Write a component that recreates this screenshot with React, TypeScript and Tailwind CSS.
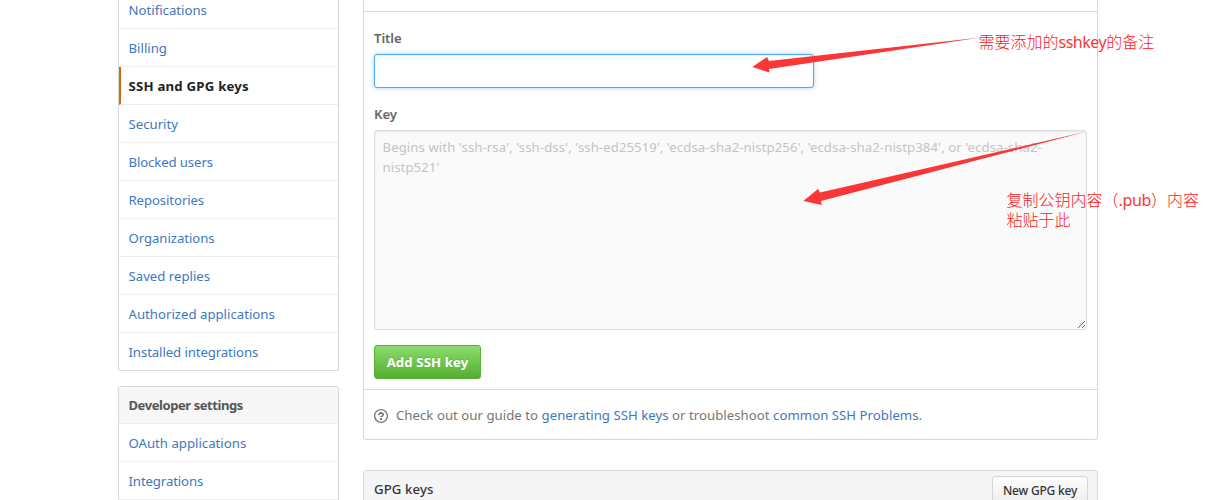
import React from "react";

const accountLinks = [
  { label: "Notifications", spacing: "tracking-normal" },
  { label: "Billing", spacing: "tracking-normal" },
  { label: "SSH and GPG keys", spacing: "tracking-[0.22px]", selected: true },
  { label: "Security", spacing: "tracking-normal" },
  { label: "Blocked users", spacing: "tracking-[-0.12px]" },
  { label: "Repositories", spacing: "tracking-[-0.1px]" },
  { label: "Organizations", spacing: "tracking-[-0.07px]" },
  { label: "Saved replies", spacing: "tracking-normal" },
  { label: "Authorized applications", spacing: "tracking-normal" },
  { label: "Installed integrations", spacing: "tracking-[-0.1px]" },
];

const developerLinks = [
  { label: "OAuth applications", spacing: "tracking-normal" },
  { label: "Integrations", spacing: "tracking-[-0.12px]" },
];

type MenuLink = { label: string; spacing: string; selected?: boolean };

function MenuItem({ label, spacing, selected }: MenuLink) {
  return (
    <a
      href="#"
      className={`flex h-[38px] shrink-0 items-center border-b border-[#eeeeee] pt-px last:h-[37px] last:border-b-0 ${spacing} ${
        selected
          ? "border-l-2 border-l-[#d26911] pl-[7.5px] font-bold text-[#222222]"
          : "pl-[9.5px] text-[#4078c0]"
      }`}
    >
      {label}
    </a>
  );
}

function Sidebar() {
  return (
    <aside className="flex w-[221px] shrink-0 flex-col">
      <nav className="-mt-[9px] flex flex-col rounded-b-[3px] border border-t-0 border-[#d8d8d8]">
        {accountLinks.map((link) => (
          <MenuItem key={link.label} {...link} />
        ))}
      </nav>
      <nav className="mt-[15px] flex flex-col rounded-[3px] border border-[#d8d8d8]">
        <h3 className="flex h-[37px] items-center rounded-t-[2px] border-b border-[#eeeeee] bg-[#f7f7f7] pl-[9.5px] text-[13px] font-bold tracking-[-0.42px] text-[#555555]">
          Developer settings
        </h3>
        {developerLinks.map((link) => (
          <MenuItem key={link.label} {...link} />
        ))}
        <span className="h-2" />
      </nav>
    </aside>
  );
}

function QuestionIcon() {
  return (
    <svg width="14" height="16" viewBox="0 0 14 16" fill="#767676" className="shrink-0">
      <path
        fillRule="evenodd"
        d="M6 10h2v2H6v-2zm4-3.5C10 8.64 8 9 8 9H6c0-.55.45-1 1-1h.5c.28 0 .5-.22.5-.5v-1c0-.28-.22-.5-.5-.5h-1c-.28 0-.5.22-.5.5V7H4c0-1.5 1.5-3 3-3s3 1 3 2.500zM7 2.300c3.140 0 5.700 2.560 5.700 5.700s-2.560 5.700-5.700 5.700A5.710 5.710 0 0 1 1.300 8c0-3.140 2.560-5.700 5.700-5.700zM7 1C3.140 1 0 4.140 0 8s3.140 7 7 7 7-3.140 7-7-3.140-7-7-7z"
      />
    </svg>
  );
}

function KeyForm() {
  return (
    <section className="flex h-[440px] shrink-0 flex-col rounded-b-[3px] border border-t-0 border-[#d8d8d8]">
      <div className="h-3 shrink-0 border-b border-[#d8d8d8]" />
      <form className="flex h-[378px] shrink-0 flex-col items-start border-b border-[#d8d8d8] px-[10px]">
        <label htmlFor="title" className="mt-4 h-5 text-[13.2px] leading-5 font-semibold tracking-[-0.1px] text-[#666666]">
          Title
        </label>
        <input
          id="title"
          className="mt-[6px] h-[34px] w-[440px] rounded-[3px] border border-[#51a7e8] bg-white px-2 shadow-[inset_0_1px_2px_rgba(0,0,0,0.075),0_0_5px_rgba(81,167,232,0.5)] outline-none"
        />
        <label htmlFor="key" className="mt-4 h-5 text-[13.2px] leading-5 font-semibold tracking-[-0.1px] text-[#666666]">
          Key
        </label>
        <textarea
          id="key"
          placeholder="Begins with 'ssh-rsa', 'ssh-dss', 'ssh-ed25519', 'ecdsa-sha2-nistp256', 'ecdsa-sha2-nistp384', or 'ecdsa-sha2-nistp521'"
          className="mt-[6px] h-[200px] w-[713px] resize rounded-[3px] border border-[#dddddd] bg-[#fafafa] px-[7.5px] py-[6px] leading-5 tracking-[0.07px] shadow-[inset_0_1px_2px_rgba(0,0,0,0.075)] outline-none placeholder:text-[#c4c4c4]"
        />
        <button
          type="button"
          className="mt-[15px] h-[34px] w-[107px] rounded-[3px] border border-[#5aad35] bg-linear-to-b from-[#8add6d] to-[#55ae2e] text-[13.2px] font-bold tracking-[0.1px] text-white [text-shadow:0_-1px_0_rgba(0,0,0,0.15)]"
        >
          Add SSH key
        </button>
      </form>
      <p className="flex flex-1 items-center gap-2 pt-[2px] pl-[10px] tracking-[0.03px] text-[#767676]">
        <QuestionIcon />
        <span className="pb-px">
          Check out our guide to <a href="#" className="text-[#4078c0]">generating SSH keys</a> or troubleshoot{" "}
          <a href="#" className="text-[#4078c0]">common SSH Problems.</a>
        </span>
      </p>
    </section>
  );
}

function GpgHeader() {
  return (
    <section className="mt-[30px] flex h-12 shrink-0 items-start justify-between rounded-t-[3px] border border-[#d8d8d8] bg-[#f5f5f5] pr-[9px] pl-[10px]">
      <h3 className="mt-2 leading-5 font-medium tracking-[0.1px] text-[#333333]">GPG keys</h3>
      <button
        type="button"
        className="mt-[5px] h-[29px] w-[96px] rounded-[3px] border border-[#d5d5d5] bg-linear-to-b from-[#fcfcfc] to-[#eeeeee] text-[12px] font-medium tracking-[-0.2px] text-[#333333]"
      >
        New GPG key
      </button>
    </section>
  );
}

function Annotations() {
  return (
    <div className="pointer-events-none absolute inset-0 font-['Noto_Sans','Noto_Sans_CJK_SC',sans-serif] text-[16px] leading-5 font-light whitespace-nowrap text-[#fb2020]">
      <svg width="1208" height="500" viewBox="0 0 1208 500" fill="#fb3636" className="absolute inset-0">
        <path d="M981 37.500L769 61L767 57L752.300 67L769.500 72.600L769 69Z" />
        <path d="M1087 131.500L820 192.500L818 189L803.300 201L821.700 205L821 201Z" />
      </svg>
      <span className="absolute top-[32px] left-[978.5px]">
        需要添加的<span className="font-normal tracking-[-0.5px] text-[#fb3636]">sshkey</span>的备注
      </span>
      <span className="absolute top-[190px] left-[1006.5px]">
        复制公钥内容（<span className="font-normal tracking-[-0.35px] text-[#fb3636]">.pub</span>）内容
        <br />
        粘贴于此
      </span>
    </div>
  );
}

export default function App() {
  return (
    <div className="relative flex h-[500px] w-[1208px] gap-6 overflow-hidden bg-white pl-[118px] font-['Noto_Sans','Open_Sans',sans-serif] text-[13.200px] leading-5">
      <Sidebar />
      <main className="flex w-[735px] shrink-0 flex-col">
        <KeyForm />
        <GpgHeader />
      </main>
      <Annotations />
    </div>
  );
}
